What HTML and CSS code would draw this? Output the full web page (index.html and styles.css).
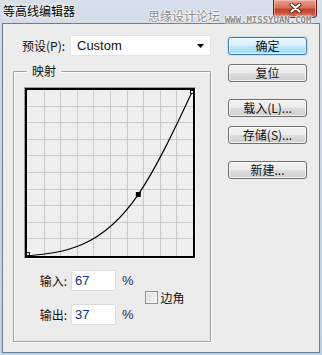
FILE: index.html
```html
<!DOCTYPE html>
<html lang="zh-CN">
<head>
    <meta charset="UTF-8">
    <title>等高线编辑器</title>
    <link rel="stylesheet" href="styles.css">
</head>
<body>
    <div class="window">
        <div class="titlebar">
            <span class="title">等高线编辑器</span>
            <span class="watermark">思缘设计论坛 <span class="watermark-url">WWW.MISSYUAN.COM</span></span>
            <span class="close">
                <svg width="13" height="10" viewBox="0 0 13 10">
                    <path d="M2.5 1.5 L10.5 8.5 M10.5 1.5 L2.5 8.5" stroke="#4a1a12" stroke-width="4" stroke-linecap="round"/>
                    <path d="M2.5 1.5 L10.5 8.5 M10.5 1.5 L2.5 8.5" stroke="#fff" stroke-width="2.2" stroke-linecap="round"/>
                </svg>
            </span>
        </div>

        <div class="client">
            <div class="main">
                <div class="preset-row">
                    <span class="preset-label">预设(P):</span>
                    <div class="select">
                        <span>Custom</span>
                        <svg width="7" height="4" viewBox="0 0 7 4"><path d="M0 0 H7 L3.5 4 Z" fill="#000"/></svg>
                    </div>
                </div>

                <div class="group">
                    <span class="group-title">映射</span>
                    <div class="graph">
                        <svg class="graph-svg" width="170" height="170" viewBox="0 0 170 170">
                            <g stroke="#c9c9c9" stroke-width="1" shape-rendering="crispEdges">
                                <path d="M17.5 0 V170 M34.5 0 V170 M51.5 0 V170 M68.5 0 V170 M85.5 0 V170 M102.5 0 V170 M119.5 0 V170 M136.5 0 V170 M153.5 0 V170"/>
                                <path d="M0 16.5 H170 M0 33.5 H170 M0 50.5 H170 M0 67.5 H170 M0 84.5 H170 M0 101.5 H170 M0 118.5 H170 M0 135.5 H170 M0 152.5 H170"/>
                            </g>
                            <path d="M0 170 C37.96 166.29 75.94 162.57 113.9 107.1 C132.6 79.76 151.3 39.88 170 0" fill="none" stroke="#000" stroke-width="1.2"/>
                            <rect x="-0.5" y="166.5" width="3" height="3" fill="#fff" stroke="#000" stroke-width="1"/>
                            <rect x="167.5" y="0.5" width="3" height="3" fill="#fff" stroke="#000" stroke-width="1"/>
                            <rect x="111.5" y="104.5" width="5" height="5" fill="#000"/>
                        </svg>
                    </div>

                    <div class="fields">
                        <div class="field-col">
                            <div class="field">
                                <span class="field-label">输入:</span>
                                <div class="input">67</div>
                                <span class="pct">%</span>
                            </div>
                            <div class="field">
                                <span class="field-label">输出:</span>
                                <div class="input">37</div>
                                <span class="pct">%</span>
                            </div>
                        </div>
                        <label class="check"><span class="check-box"></span>边角</label>
                    </div>
                </div>
            </div>

            <div class="buttons">
                <div class="btn-group">
                    <button class="btn btn-default">确定</button>
                    <button class="btn">复位</button>
                </div>
                <div class="btn-group">
                    <button class="btn">载入(L)...</button>
                    <button class="btn">存储(S)...</button>
                </div>
                <div class="btn-group">
                    <button class="btn">新建...</button>
                </div>
            </div>
        </div>
    </div>
</body>
</html>
```

FILE: styles.css
```css
:root {
    --face: #ececec;
    --text: #111;
    --etch: #a0a0a0;
}

* {
    margin: 0;
    padding: 0;
    box-sizing: border-box;
}

body {
    font-family: "Noto Sans CJK SC", "DejaVu Sans", sans-serif;
    font-size: 12px;
    color: var(--text);
    background: #c8d7e8;
}

.window {
    width: 322px;
    height: 355px;
    display: flex;
    flex-direction: column;
    background: linear-gradient(to bottom, #d5dee9 0%, #c9d7e7 40%, #bcd0e6 100%);
}

.titlebar {
    height: 23px;
    display: flex;
    align-items: flex-start;
    position: relative;
}

.title {
    padding: 3px 0 0 3px;
    font-size: 12px;
    line-height: 16px;
    color: #000;
    text-shadow: 0 0 4px #fff, 0 0 6px #fff;
}

/* watermark sits over the frame and the close button */
.watermark {
    position: absolute;
    left: 148px;
    top: 9px;
    z-index: 2;
    font-size: 12px;
    line-height: 14px;
    color: #8a8a8a;
    text-shadow: 0 0 2px #fff, 0 0 2px #fff, 0 0 3px #fff;
    white-space: nowrap;
}

    .watermark-url {
        font-family: "DejaVu Sans Mono", monospace;
        font-size: 9px;
        font-weight: bold;
        margin-left: 2px;
        position: relative;
        top: 2px;
    }

.close {
    margin-left: auto;
    margin-right: 5px;
    width: 44px;
    height: 18px;
    display: flex;
    align-items: center;
    justify-content: center;
    padding-bottom: 2px;
    border: 1px solid #6b2419;
    border-top: none;
    border-radius: 0 0 4px 4px;
    background: linear-gradient(to bottom, #e7a493 0%, #d6705b 45%, #c2412a 55%, #d9684e 100%);
    box-shadow: inset 0 0 0 1px rgba(255, 210, 200, 0.5);
    position: relative;
    z-index: 1;
}

.client {
    flex: 1;
    margin: 0 2px 2px 2px;
    border: 1px solid #6f7d8c;
    background: var(--face);
    display: flex;
    padding: 11px 0 0 10px;
}

.main {
    width: 198px;
    display: flex;
    flex-direction: column;
}

.preset-row {
    height: 21px;
    display: flex;
    align-items: center;
}

.preset-label {
    padding-left: 9px;
}

.select {
    margin-left: auto;
    width: 141px;
    height: 21px;
    background: #fff;
    border: 1px solid #e2e2e2;
    border-radius: 2px;
    display: flex;
    align-items: center;
    justify-content: space-between;
    padding: 0 6px 0 6px;
    font-family: "Liberation Sans", sans-serif;
    font-size: 13px;
}

.group {
    margin-top: 15px;
    height: 271px;
    border: 1px solid var(--etch);
    box-shadow: 1px 1px 0 #fff, inset 1px 1px 0 #fff;
    display: flex;
    flex-direction: column;
}

.group-title {
    align-self: flex-start;
    margin: -9px 0 0 13px;
    padding: 0 5px;
    line-height: 16px;
    background: var(--face);
}

.graph {
    margin: 8px 0 0 10px;
    align-self: flex-start;
    border: 1px solid;
    border-color: #9c9c9c #fff #fff #9c9c9c;
}

.graph-svg {
    display: block;
    border: 2px solid #000;
    background: #efefef;
    overflow: visible;
}

.fields {
    margin-top: 11px;
    display: flex;
    align-items: center;
}

.field-col {
    display: flex;
    flex-direction: column;
    gap: 13px;
}

.field {
    display: flex;
    align-items: center;
}

.field-label {
    width: 53px;
    margin-right: 4px;
    text-align: right;
}

.input {
    width: 45px;
    height: 21px;
    background: #fff;
    border: 1px solid #dcdcdc;
    border-radius: 2px;
    padding-left: 3px;
    line-height: 19px;
    font-family: "Liberation Sans", sans-serif;
    font-size: 13px;
    color: #13307e;
}

.pct {
    margin-left: 6px;
    font-family: "Liberation Sans", sans-serif;
    font-size: 13px;
    color: #1b2a55;
}

.check {
    margin-left: 11px;
    display: flex;
    align-items: center;
    gap: 3px;
}

.check-box {
    width: 13px;
    height: 13px;
    border: 1px solid #8e8f8f;
    background: linear-gradient(135deg, #dcdcdc, #f7f7f7);
    box-shadow: inset 0 0 0 1px #f4f4f4;
}

.buttons {
    margin: 2px 0 0 17px;
    width: 79px;
    display: flex;
    flex-direction: column;
    gap: 17px;
}

.btn-group {
    display: flex;
    flex-direction: column;
    gap: 9px;
}

.btn {
    height: 18px;
    width: 79px;
    border: 1px solid #707070;
    border-radius: 3px;
    background: linear-gradient(to bottom, #f2f2f2 0%, #ebebeb 48%, #dddddd 52%, #cfcfcf 100%);
    box-shadow: inset 0 0 0 1px rgba(255, 255, 255, 0.7);
    font-family: "Noto Sans CJK SC", sans-serif;
    font-size: 12px;
    line-height: 14px;
    color: #111;
    cursor: pointer;
}

.btn-default {
    border-color: #3c7fb1;
    background: linear-gradient(to bottom, #eaf6fd 0%, #d9f0fc 48%, #bee6fd 52%, #a7d9f5 100%);
    box-shadow: inset 0 0 0 1px rgba(255, 255, 255, 0.6), 0 0 2px #64b8e8;
}
```
